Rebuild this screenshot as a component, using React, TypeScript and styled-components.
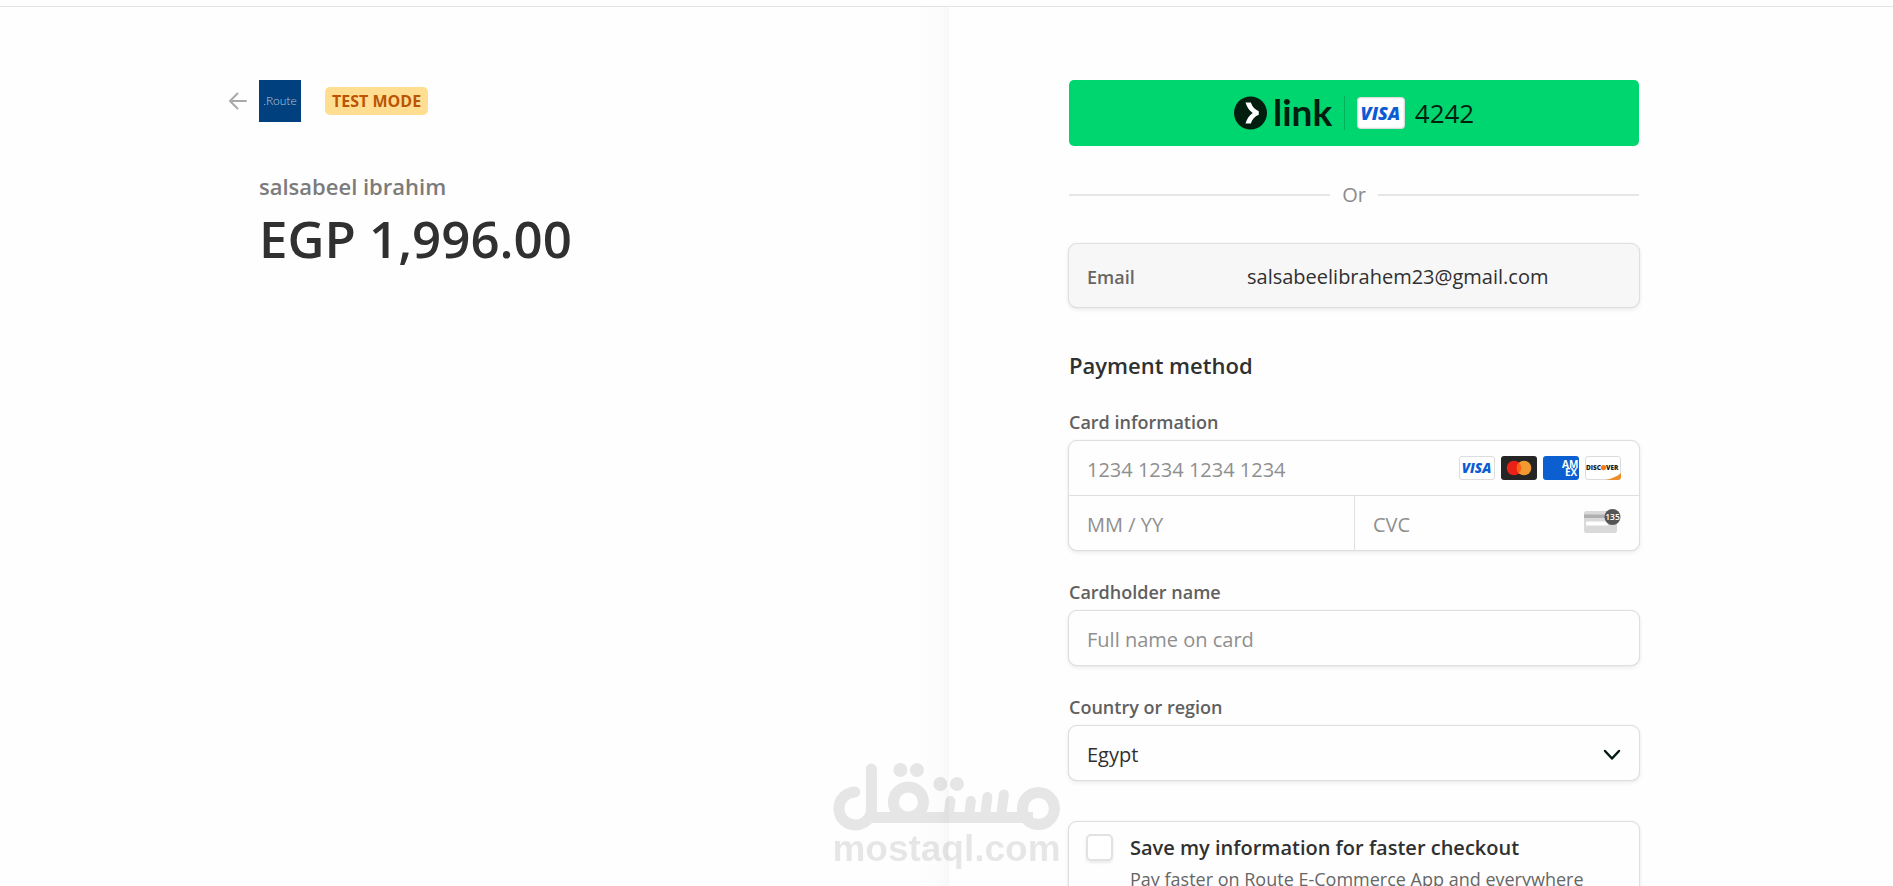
import React from "react";
import styled, { createGlobalStyle } from "styled-components";

const GlobalStyle = createGlobalStyle`
  *, *::before, *::after { box-sizing: border-box; }
  html { scrollbar-width: none; }
  body {
    margin: 0;
    background: #fefefe;
    color: #303030;
    font-family: "Open Sans", "Noto Sans", sans-serif;
    font-size: 20px;
    line-height: 24px;
  }
  input, select, button { font: inherit; color: inherit; }
  svg { flex: none; overflow: visible; }
`;

const TopBar = styled.div`
  height: 7px;
  border-bottom: 1px solid #e3e3e3;
`;

const Page = styled.div`
  display: grid;
  grid-template-columns: 949fr 944fr;
  min-height: calc(100vh - 7px);
`;

const Summary = styled.section`
  display: flex;
  justify-content: flex-end;
  padding: 73px 118px 48px 48px;
  background: linear-gradient(to left, #f8f8f8, #fcfcfc 12px, #fefefe 30px);
`;

const Checkout = styled.main`
  padding: 73px 48px 48px 119px;
`;

const Column = styled.div`
  width: 100%;
  max-width: 572px;
`;

const BrandRow = styled.header`
  display: flex;
  align-items: center;
  margin-left: -30px;
`;

const BackLink = styled.a`
  display: flex;
  width: 30px;
`;

const Logo = styled.div`
  display: flex;
  align-items: center;
  justify-content: center;
  width: 42px;
  height: 42px;
  background: #00407f;
  color: #b9cadb;
  font-family: Lato, sans-serif;
  font-size: 12px;
  font-weight: 300;
`;

const Badge = styled.span`
  margin-left: 24px;
  padding: 0 7px;
  border-radius: 5px;
  background: #ffde92;
  color: #bb5504;
  font-size: 16px;
  font-weight: 700;
  line-height: 28px;
`;

const Merchant = styled.h1`
  margin: 48px 0 4px;
  color: #7b7b7b;
  font-size: 22px;
  font-weight: 600;
  line-height: 32px;
`;

const Price = styled.p`
  margin: 0;
  font-size: 51px;
  font-weight: 600;
  line-height: 64px;
`;

const LinkButton = styled.button`
  display: flex;
  align-items: center;
  justify-content: center;
  width: calc(100% - 2px);
  height: 66px;
  margin: 0 1px;
  padding: 0;
  border: 0;
  border-radius: 5px;
  background: #00d66f;
  color: #011e0f;
  font-size: 26px;
  font-weight: 500;
  cursor: pointer;
`;

const ButtonRule = styled.span`
  width: 1px;
  height: 34px;
  margin: 0 12px;
  background: #00b05c;
`;

const Last4 = styled.span`
  margin-left: 10px;
`;

const OrRow = styled.div`
  display: flex;
  align-items: center;
  gap: 12px;
  margin: 37px 1px 36px;
  color: #8b8b8b;

  &::before, &::after {
    content: "";
    flex: 1;
    height: 2px;
    background: #e6e6e6;
  }
`;

const Box = styled.div`
  border: 1px solid #dfdfdf;
  border-radius: 9px;
  background: #fefefe;
  box-shadow: 0 0 1px rgba(0, 0, 0, 0.12), 0 2px 4px rgba(0, 0, 0, 0.07);
`;

const EmailBox = styled(Box)`
  display: grid;
  grid-template-columns: 160px 1fr;
  align-items: center;
  height: 65px;
  padding: 2px 18px 0;
  background: #f7f7f7;
`;

const EmailLabel = styled.span`
  color: #666;
  font-size: 18px;
  font-weight: 600;
`;

const Heading = styled.h2`
  margin: 43px 1px 31px;
  font-size: 22px;
  font-weight: 600;
  line-height: 28px;
`;

const Field = styled.div`
  margin-bottom: 29px;
`;

const Label = styled.label`
  display: block;
  margin: 0 1px 6px;
  color: #606060;
  font-size: 18px;
  font-weight: 600;
`;

const Input = styled.input`
  flex: 1;
  min-width: 0;
  width: 100%;
  height: 100%;
  padding: 2px 0 0 18px;
  border: 0;
  border-radius: 9px;
  outline: 0;
  background: transparent;

  &::placeholder { color: #8f8f8f; opacity: 1; }
`;

const FieldBox = styled(Box)`
  display: flex;
  align-items: center;
  height: 56px;
`;

const CardRow = styled.div`
  display: flex;
  align-items: center;
  height: 54px;
  padding-right: 18px;
`;

const CardSplit = styled.div`
  display: grid;
  grid-template-columns: 1fr 1fr;
  border-top: 1px solid #dfdfdf;
`;

const CvcCell = styled(CardRow)`
  border-left: 1px solid #dfdfdf;

  & > svg { margin-bottom: 4px; }
`;

const Brands = styled.div`
  display: flex;
  gap: 6px;
`;

const SelectBox = styled(FieldBox)`
  display: grid;
  align-items: center;

  & > * { grid-area: 1 / 1; }
  & > svg { justify-self: end; margin: 4px 18px 0 0; pointer-events: none; }
`;

const Select = styled.select`
  width: 100%;
  height: 54px;
  padding: 3px 18px 0;
  border: 0;
  border-radius: 9px;
  outline: 0;
  background: transparent;
  appearance: none;
`;

const SaveBox = styled(Box)`
  display: grid;
  grid-template-columns: 27px 1fr;
  column-gap: 17px;
  margin-top: 40px;
  padding: 12px 17px 24px;
`;

const Checkbox = styled.input`
  width: 27px;
  height: 27px;
  margin: 0;
  border: 2px solid #e2e2e2;
  border-radius: 5px;
  background: #fff;
  box-shadow: 0 2px 3px rgba(0, 0, 0, 0.08);
  appearance: none;

  &:checked { background: #303030; }
`;

const SaveTitle = styled.label`
  font-weight: 600;
  line-height: 28px;
`;

const SaveNote = styled.p`
  grid-column: 2;
  margin: 4px 0 0;
  color: #666;
  font-size: 18px;
  line-height: 26px;
`;

const Watermark = styled.div`
  position: fixed;
  bottom: 19px;
  left: 50%;
  display: flex;
  flex-direction: column;
  align-items: center;
  transform: translateX(-50%);
  color: rgba(0, 0, 0, 0.095);
  font-family: "Liberation Sans", Arial, sans-serif;
  font-size: 37px;
  font-weight: 700;
  line-height: 36px;
  pointer-events: none;
`;

const brandFont = { fontFamily: "Open Sans, sans-serif" };

function VisaMark({ width, height }: { width: number; height: number }) {
  return (
    <svg width={width} height={height} viewBox="0 0 36 24" role="img" aria-label="Visa">
      <rect x=".5" y=".5" width="35" height="23" rx="2.5" fill="#fff" stroke="#dcdcdc" />
      <text x="17.5" y="17" textAnchor="middle" fontSize="13.5" fontWeight="800" fontStyle="italic" fill="#0b5bd3" style={brandFont}>VISA</text>
    </svg>
  );
}

function MastercardMark() {
  return (
    <svg width="36" height="24" viewBox="0 0 36 24" role="img" aria-label="Mastercard">
      <rect width="36" height="24" rx="3" fill="#252525" />
      <circle cx="13" cy="12" r="7.3" fill="#eb2017" />
      <circle cx="23" cy="12" r="7.3" fill="#f29a31" />
      <path d="M18 6.7a7.3 7.3 0 0 1 0 10.6a7.3 7.3 0 0 1 0-10.6z" fill="#fb5f13" />
    </svg>
  );
}

function AmexMark() {
  return (
    <svg width="36" height="24" viewBox="0 0 36 24" role="img" aria-label="American Express">
      <rect width="36" height="24" rx="3" fill="#0b5fd1" />
      <text fill="#fff" fontSize="10" fontWeight="700" style={brandFont}>
        <tspan x="19" y="11.5">AM</tspan>
        <tspan x="22" y="20">EX</tspan>
      </text>
    </svg>
  );
}

function DiscoverMark() {
  return (
    <svg width="36" height="24" viewBox="0 0 36 24" role="img" aria-label="Discover">
      <rect x=".5" y=".5" width="35" height="23" rx="2.5" fill="#fff" stroke="#dcdcdc" />
      <path d="M36 17v4a3 3 0 0 1-3 3H20c7-1.200 12-3.500 16-7z" fill="#ee8e2b" />
      <g fontSize="6.5" fontWeight="800" fill="#1d1d1d" style={brandFont}>
        <text x="1" y="14">DISC</text>
        <text x="21" y="14">VER</text>
      </g>
      <circle cx="18.500" cy="11.600" r="2.600" fill="#f47a1c" />
    </svg>
  );
}

function CvcMark() {
  return (
    <svg width="37" height="24" viewBox="0 0 37 24" aria-hidden="true">
      <rect y="2" width="33" height="22" rx="2.500" fill="#d9d9d9" />
      <rect y="5.500" width="33" height="3.500" fill="#b0b0b0" />
      <rect x="2" y="12.500" width="22" height="4" rx="1" fill="#fff" />
      <circle cx="28.500" cy="8" r="8" fill="#555" />
      <text x="28.500" y="11" textAnchor="middle" fontSize="8.500" fontWeight="600" fill="#fff" style={brandFont}>135</text>
    </svg>
  );
}

function LinkLogo() {
  return (
    <svg width="98" height="34" viewBox="0 0 98 34" role="img" aria-label="link">
      <circle cx="16.500" cy="17" r="16.500" fill="#011e0f" />
      <path d="M11.500 6.500h5.300c1.400 4.200 4.400 7.300 8 8.700v3.600c-3.600 1.400-6.600 4.500-8 8.700h-5.300c1.400-4.700 3.900-8.200 7.200-10.500-3.300-2.300-5.800-5.800-7.200-10.500z" fill="#fff" />
      <text x="39" y="30" fontSize="37" fontWeight="700" fill="#011e0f" style={{ fontFamily: "Lato, sans-serif" }}>link</text>
    </svg>
  );
}

function MostaqlLogo() {
  return (
    <svg width="228" height="68" viewBox="0 0 228 68" fill="none" stroke="#000" strokeLinecap="round" opacity=".095" aria-hidden="true">
      <g strokeWidth="11">
        <path d="M22 29a16.500 16.500 0 1 0 16.500 20.500V6" strokeLinejoin="round" />
        <path d="M36 54.500H200" strokeLinecap="butt" />
        <circle cx="75.500" cy="39" r="15" />
        <circle cx="205.500" cy="45.500" r="16" />
        <path d="M116 50l1.500-12M136.500 50l1.500-12M152.500 50l2-16M168.500 50l2.500-18.500" strokeWidth="10" />
      </g>
      <g fill="#000" stroke="none">
        <circle cx="67.500" cy="7" r="7" />
        <circle cx="84" cy="7" r="7" />
        <circle cx="107.500" cy="21" r="7" />
        <circle cx="124" cy="21" r="7" />
      </g>
    </svg>
  );
}

export default function App() {
  return (
    <>
      <GlobalStyle />
      <TopBar />
      <Page>
        <Summary>
          <Column>
            <BrandRow>
              <BackLink href="#back" aria-label="Back">
                <svg width="19" height="18" viewBox="0 0 19 18" fill="none" stroke="#a9a9a9" strokeWidth="2" strokeLinecap="round" strokeLinejoin="round" aria-hidden="true">
                  <path d="M17 9H1.500M8.500 1.500L1 9l7.500 7.500" />
                </svg>
              </BackLink>
              <Logo>.Route</Logo>
              <Badge>TEST MODE</Badge>
            </BrandRow>
            <Merchant>salsabeel ibrahim</Merchant>
            <Price>EGP 1,996.00</Price>
          </Column>
        </Summary>
        <Checkout>
          <Column>
            <LinkButton type="button">
              <LinkLogo />
              <ButtonRule />
              <VisaMark width={48} height={32} />
              <Last4>4242</Last4>
            </LinkButton>
            <OrRow>Or</OrRow>
            <EmailBox>
              <EmailLabel>Email</EmailLabel>
              <span>salsabeelibrahem23@gmail.com</span>
            </EmailBox>
            <Heading>Payment method</Heading>
            <Field>
              <Label htmlFor="card-number">Card information</Label>
              <Box>
                <CardRow>
                  <Input id="card-number" placeholder="1234 1234 1234 1234" inputMode="numeric" />
                  <Brands>
                    <VisaMark width={36} height={24} />
                    <MastercardMark />
                    <AmexMark />
                    <DiscoverMark />
                  </Brands>
                </CardRow>
                <CardSplit>
                  <CardRow>
                    <Input placeholder="MM / YY" aria-label="Expiration" inputMode="numeric" />
                  </CardRow>
                  <CvcCell>
                    <Input placeholder="CVC" aria-label="CVC" inputMode="numeric" />
                    <CvcMark />
                  </CvcCell>
                </CardSplit>
              </Box>
            </Field>
            <Field>
              <Label htmlFor="cardholder">Cardholder name</Label>
              <FieldBox>
                <Input id="cardholder" placeholder="Full name on card" />
              </FieldBox>
            </Field>
            <Field>
              <Label htmlFor="country">Country or region</Label>
              <SelectBox>
                <Select id="country" defaultValue="EG">
                  <option value="EG">Egypt</option>
                </Select>
                <svg width="18" height="12" viewBox="0 0 18 12" fill="none" stroke="#061b11" strokeWidth="2.500" strokeLinecap="round" strokeLinejoin="round" aria-hidden="true">
                  <path d="M2 2l7 7.500L16 2" />
                </svg>
              </SelectBox>
            </Field>
            <SaveBox>
              <Checkbox type="checkbox" id="save-info" />
              <SaveTitle htmlFor="save-info">Save my information for faster checkout</SaveTitle>
              <SaveNote>Pay faster on Route E-Commerce App and everywhere</SaveNote>
            </SaveBox>
          </Column>
        </Checkout>
      </Page>
      <Watermark>
        <MostaqlLogo />
        <span>mostaql.com</span>
      </Watermark>
    </>
  );
}
